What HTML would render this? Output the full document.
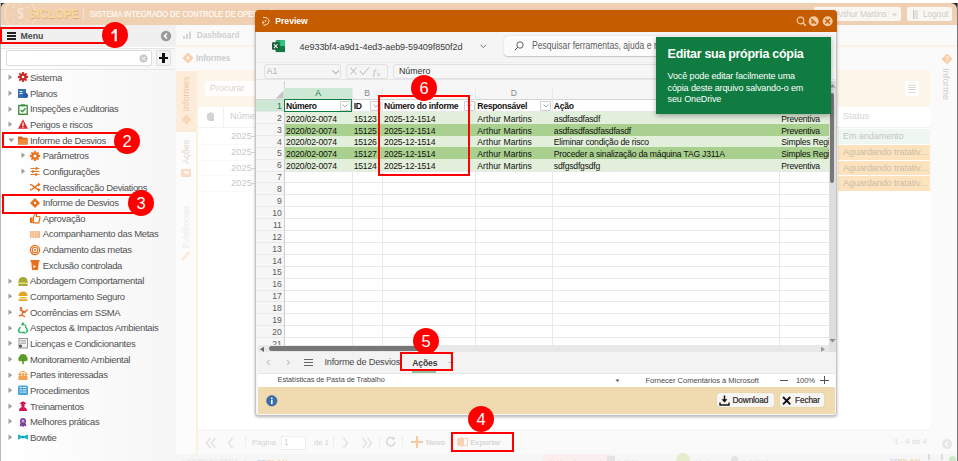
<!DOCTYPE html><html><head><meta charset="utf-8"><style>
html,body{margin:0;padding:0;}
body{width:958px;height:461px;overflow:hidden;position:relative;background:#fff;font-family:'Liberation Sans', sans-serif;}
div{box-sizing:border-box;}
svg{position:absolute;overflow:visible;}
</style></head><body>
<div style="position:absolute;left:0px;top:3px;width:6px;height:6px;background:#333;"></div>
<div style="position:absolute;left:951px;top:3px;width:7px;height:8px;background:#222;"></div>
<div style="position:absolute;left:0px;top:3px;width:1px;height:458px;background:#b8b8b8;"></div>
<div style="position:absolute;left:957px;top:3px;width:1px;height:458px;background:#777;"></div>
<div style="position:absolute;left:1px;top:3px;width:956px;height:22px;background:#efd0b3;border-radius:5px 6px 0 0;"></div>
<div style="position:absolute;left:1px;top:3px;width:60px;height:22px;overflow:hidden;"><svg style="left:0;top:-3px" width="60" height="30"><circle cx="19.5" cy="14" r="15.5" fill="none" stroke="#f5ddc8" stroke-width="1.5"/><path d="M19.5 3 V6 M19.5 22 V25 M8 14 H11 M28 14 H31 M11.5 6 L13.5 8 M27.5 6 L25.5 8 M11.5 22 L13.5 20 M27.5 22 L25.5 20" stroke="#f5ddc8" stroke-width="1.2"/><path d="M22.5 9.5 Q19.5 8.2 17.8 10 Q17 12 19.5 13 Q22 14 21.3 16.5 Q19.8 18.5 16.8 17.3" stroke="#f6e1cf" stroke-width="2.6" fill="none"/></svg></div>
<div style="position:absolute;left:28.5px;top:6.50px;height:15.00px;line-height:15.00px;font-size:12.5px;color:#f9d99c;font-weight:bold;letter-spacing:0px;white-space:nowrap;transform:scaleX(0.91);transform-origin:0 50%;text-shadow:0.5px 0.8px 0.6px #d9ae86;">SICLOPE</div>
<div style="position:absolute;left:83px;top:9px;width:1px;height:11px;background:#f6e2cf;"></div>
<div style="position:absolute;left:89.5px;top:9.20px;height:10.80px;line-height:10.80px;font-size:9px;color:#fdf3ea;font-weight:normal;letter-spacing:0px;white-space:nowrap;transform:scaleX(0.82);transform-origin:0 50%;text-shadow:0 0 0.4px #fff;">SISTEMA INTEGRADO DE CONTROLE DE OPERAÇÕES</div>
<div style="position:absolute;left:814px;top:7px;width:87px;height:14px;background:#faf7f3;border-radius:2px;"></div>
<div style="position:absolute;left:835.5px;top:9.26px;height:10.08px;line-height:10.08px;font-size:8.4px;color:#cfcbc7;font-weight:normal;letter-spacing:-0.1px;white-space:nowrap;">Arthur Martins</div>
<div style="position:absolute;left:887.5px;top:9px;width:1px;height:10px;background:#f3f1ef;"></div>
<svg style="left:891px;top:12.5px" width="8" height="6"><path d="M0.5 0.5 L3.5 3.5 L6.5 0.5Z" fill="#dcd8d4"/></svg>
<div style="position:absolute;left:907px;top:7px;width:45px;height:14px;background:#faf7f3;border-radius:2px;"></div>
<div style="position:absolute;left:913px;top:9.5px;width:4.5px;height:9px;background:#e3e3e3;border-left:1.5px solid #ccc;"></div>
<div style="position:absolute;left:923px;top:9.26px;height:10.08px;line-height:10.08px;font-size:8.4px;color:#cfcbc7;font-weight:normal;letter-spacing:-0.05px;white-space:nowrap;">Logout</div>
<div style="position:absolute;left:1px;top:25px;width:175px;height:436px;background:linear-gradient(to right,#ffffff,#f6f6f6);"></div>
<div style="position:absolute;left:1px;top:25px;width:175px;height:22px;background:#f0f0f0;"></div>
<div style="position:absolute;left:7px;top:32.3px;width:9px;height:1.6px;background:#222;"></div>
<div style="position:absolute;left:7px;top:35.3px;width:9px;height:1.6px;background:#222;"></div>
<div style="position:absolute;left:7px;top:38.3px;width:9px;height:1.6px;background:#222;"></div>
<div style="position:absolute;left:20.5px;top:30.72px;height:10.56px;line-height:10.56px;font-size:8.8px;color:#4a4a4a;font-weight:bold;letter-spacing:0px;white-space:nowrap;">Menu</div>
<svg style="left:160px;top:30px" width="12" height="12"><circle cx="6" cy="6" r="5.2" fill="#9a9a9a"/><path d="M7 3.5 L4.5 6 L7 8.5" stroke="#fff" stroke-width="1.6" fill="none"/></svg>
<div style="position:absolute;left:1px;top:47px;width:174px;height:1px;background:#fff;"></div>
<div style="position:absolute;left:1px;top:48px;width:174px;height:1px;background:#e4e4e4;"></div>
<div style="position:absolute;left:6px;top:50px;width:145.5px;height:15.5px;background:#fff;border:1px solid #dcdcdc;border-radius:2px;"></div>
<svg style="left:139px;top:53.5px" width="9" height="9"><circle cx="4.5" cy="4.5" r="4" fill="#c8c8c8"/><path d="M2.8 2.8 L6.2 6.2 M6.2 2.8 L2.8 6.2" stroke="#fff" stroke-width="1"/></svg>
<div style="position:absolute;left:156px;top:50px;width:15px;height:16px;background:#f2f2f2;border:1px solid #dedede;border-radius:2px;"></div>
<div style="position:absolute;left:159px;top:56.8px;width:9.2px;height:2.4px;background:#111;"></div>
<div style="position:absolute;left:162.4px;top:53.4px;width:2.4px;height:9.2px;background:#111;"></div>
<div style="position:absolute;left:1px;top:69px;width:174px;height:1px;background:#e6e6e6;"></div>
<svg style="left:8.3px;top:74.2px" width="5" height="7"><path d="M0.5 0.5 L4.2 3.2 L0.5 6Z" fill="#9c9c9c"/></svg>
<svg style="left:17.5px;top:72.4px" width="10" height="10"><path d="M10.07 3.87 L10.07 6.13 L8.84 5.67 L8.19 7.24 L9.39 7.79 L7.79 9.39 L7.24 8.19 L5.67 8.84 L6.13 10.07 L3.87 10.07 L4.33 8.84 L2.76 8.19 L2.21 9.39 L0.61 7.79 L1.81 7.24 L1.16 5.67 L-0.07 6.13 L-0.07 3.87 L1.16 4.33 L1.81 2.76 L0.61 2.21 L2.21 0.61 L2.76 1.81 L4.33 1.16 L3.87 -0.07 L6.13 -0.07 L5.67 1.16 L7.24 1.81 L7.79 0.61 L9.39 2.21 L8.19 2.76 L8.84 4.33Z" fill="#c62828"/><circle cx="5" cy="5" r="1.3" fill="#fff"/></svg>
<div style="position:absolute;left:30.0px;top:72.00px;height:11.40px;line-height:11.40px;font-size:9.5px;color:#525252;font-weight:normal;letter-spacing:-0.33px;white-space:nowrap;">Sistema</div>
<svg style="left:8.3px;top:89.8px" width="5" height="7"><path d="M0.5 0.5 L4.2 3.2 L0.5 6Z" fill="#9c9c9c"/></svg>
<svg style="left:17.5px;top:88.0px" width="10" height="10"><rect x="0" y="1" width="8" height="9" fill="#3b6db3"/><rect x="1.5" y="3" width="3" height="1" fill="#cfe"/><rect x="1.5" y="5" width="3" height="1" fill="#cfe"/><circle cx="7.5" cy="7.5" r="2.6" fill="#2a5ca8"/></svg>
<div style="position:absolute;left:30.0px;top:87.64px;height:11.40px;line-height:11.40px;font-size:9.5px;color:#525252;font-weight:normal;letter-spacing:-0.33px;white-space:nowrap;">Planos</div>
<svg style="left:8.3px;top:105.5px" width="5" height="7"><path d="M0.5 0.5 L4.2 3.2 L0.5 6Z" fill="#9c9c9c"/></svg>
<svg style="left:17.5px;top:103.7px" width="10" height="10"><rect x="0.8" y="1.5" width="8.4" height="8.8" fill="none" stroke="#3a8f3a" stroke-width="1.4"/><rect x="3" y="0.3" width="4" height="2" fill="#3a8f3a"/><path d="M2.7 6 L4.4 7.7 L7.5 4.3" stroke="#3a8f3a" stroke-width="1.4" fill="none"/></svg>
<div style="position:absolute;left:30.0px;top:103.29px;height:11.40px;line-height:11.40px;font-size:9.5px;color:#525252;font-weight:normal;letter-spacing:-0.33px;white-space:nowrap;">Inspeções e Auditorias</div>
<svg style="left:8.3px;top:121.1px" width="5" height="7"><path d="M0.5 0.5 L4.2 3.2 L0.5 6Z" fill="#9c9c9c"/></svg>
<svg style="left:17.5px;top:119.3px" width="10" height="10"><path d="M5 0.3 L10 9.8 L0 9.8 Z" fill="#d32f2f"/><rect x="4.4" y="3.5" width="1.2" height="3.5" fill="#fff"/><rect x="4.4" y="7.7" width="1.2" height="1.1" fill="#fff"/></svg>
<div style="position:absolute;left:30.0px;top:118.94px;height:11.40px;line-height:11.40px;font-size:9.5px;color:#525252;font-weight:normal;letter-spacing:-0.33px;white-space:nowrap;">Perigos e riscos</div>
<svg style="left:7.5px;top:138.0px" width="7" height="5"><path d="M0.3 0.5 L6.3 0.5 L3.3 4.3Z" fill="#9c9c9c"/></svg>
<svg style="left:17.5px;top:135.0px" width="10" height="10"><path d="M0 1.5 L4 1.5 L5 2.8 L9.5 2.8 L9.5 9.5 L0 9.5 Z" fill="#d9661a"/><path d="M0.8 4.2 L10.3 4.2 L9.5 9.5 L0 9.5Z" fill="#ef8b3a"/></svg>
<div style="position:absolute;left:30.0px;top:134.58px;height:11.40px;line-height:11.40px;font-size:9.5px;color:#525252;font-weight:normal;letter-spacing:-0.33px;white-space:nowrap;">Informe de Desvios</div>
<svg style="left:21.1px;top:152.4px" width="5" height="7"><path d="M0.5 0.5 L4.2 3.2 L0.5 6Z" fill="#9c9c9c"/></svg>
<svg style="left:30.3px;top:150.6px" width="10" height="10"><path d="M10.07 3.87 L10.07 6.13 L8.84 5.67 L8.19 7.24 L9.39 7.79 L7.79 9.39 L7.24 8.19 L5.67 8.84 L6.13 10.07 L3.87 10.07 L4.33 8.84 L2.76 8.19 L2.21 9.39 L0.61 7.79 L1.81 7.24 L1.16 5.67 L-0.07 6.13 L-0.07 3.87 L1.16 4.33 L1.81 2.76 L0.61 2.21 L2.21 0.61 L2.76 1.81 L4.33 1.16 L3.87 -0.07 L6.13 -0.07 L5.67 1.16 L7.24 1.81 L7.79 0.61 L9.39 2.21 L8.19 2.76 L8.84 4.33Z" fill="#e8701a"/><circle cx="5" cy="5" r="1.5" fill="#fff"/></svg>
<div style="position:absolute;left:42.8px;top:150.23px;height:11.40px;line-height:11.40px;font-size:9.5px;color:#525252;font-weight:normal;letter-spacing:-0.33px;white-space:nowrap;">Parâmetros</div>
<svg style="left:21.1px;top:168.1px" width="5" height="7"><path d="M0.5 0.5 L4.2 3.2 L0.5 6Z" fill="#9c9c9c"/></svg>
<svg style="left:30.3px;top:166.3px" width="10" height="10"><path d="M0.5 2.5 H9.5 M0.5 5.5 H9.5 M0.5 8.5 H9.5" stroke="#e87a2a" stroke-width="1.1"/><rect x="5.5" y="1.2" width="2" height="2.6" fill="#e87a2a"/><rect x="2" y="4.2" width="2" height="2.6" fill="#e87a2a"/><rect x="5" y="7.2" width="2" height="2.6" fill="#e87a2a"/></svg>
<div style="position:absolute;left:42.8px;top:165.87px;height:11.40px;line-height:11.40px;font-size:9.5px;color:#525252;font-weight:normal;letter-spacing:-0.33px;white-space:nowrap;">Configurações</div>
<svg style="left:30.3px;top:181.9px" width="10" height="10"><path d="M0 2.5 C4 2.5 5 8 10 8 M0 8 C4 8 5 2.5 10 2.5" stroke="#e8701a" stroke-width="1.5" fill="none"/><path d="M8 0.5 L10.5 2.5 L8 4.5Z M8 6 L10.5 8 L8 10Z" fill="#e8701a"/></svg>
<div style="position:absolute;left:42.8px;top:181.52px;height:11.40px;line-height:11.40px;font-size:9.5px;color:#525252;font-weight:normal;letter-spacing:-0.33px;white-space:nowrap;">Reclassificação Deviations</div>
<svg style="left:30.3px;top:197.6px" width="10" height="10"><path d="M5 0 L10 5 L5 10 L0 5Z" fill="#e8701a"/><circle cx="5" cy="5" r="1.2" fill="#fff"/></svg>
<div style="position:absolute;left:42.8px;top:197.16px;height:11.40px;line-height:11.40px;font-size:9.5px;color:#525252;font-weight:normal;letter-spacing:-0.33px;white-space:nowrap;">Informe de Desvios</div>
<svg style="left:30.3px;top:213.2px" width="10" height="10"><rect x="0" y="4.5" width="2.6" height="5.5" fill="#e8701a"/><path d="M3.3 4.5 L5.5 0.5 Q7 0.5 6.5 3.5 L9.5 3.5 Q10.5 4 9.8 5.5 L8.8 9.8 L3.3 9.8Z" fill="none" stroke="#e8701a" stroke-width="1.2"/></svg>
<div style="position:absolute;left:42.8px;top:212.81px;height:11.40px;line-height:11.40px;font-size:9.5px;color:#525252;font-weight:normal;letter-spacing:-0.33px;white-space:nowrap;">Aprovação</div>
<svg style="left:30.3px;top:228.8px" width="10" height="10"><rect x="0" y="2" width="10" height="7" fill="#f6b98a"/><path d="M2 2 V9 M4.5 2 V9 M7 2 V9" stroke="#fbe0cc" stroke-width="0.8"/></svg>
<div style="position:absolute;left:42.8px;top:228.45px;height:11.40px;line-height:11.40px;font-size:9.5px;color:#525252;font-weight:normal;letter-spacing:-0.33px;white-space:nowrap;">Acompanhamento das Metas</div>
<svg style="left:30.3px;top:244.5px" width="10" height="10"><circle cx="5" cy="5" r="4.6" fill="none" stroke="#e8701a" stroke-width="1.2"/><circle cx="5" cy="5" r="2.8" fill="none" stroke="#e8701a" stroke-width="1.1"/><circle cx="5" cy="5" r="1.1" fill="#e8701a"/></svg>
<div style="position:absolute;left:42.8px;top:244.10px;height:11.40px;line-height:11.40px;font-size:9.5px;color:#525252;font-weight:normal;letter-spacing:-0.33px;white-space:nowrap;">Andamento das metas</div>
<svg style="left:30.3px;top:260.1px" width="10" height="10"><rect x="0.5" y="0" width="9" height="2" fill="#e8701a"/><path d="M1.3 2 L8.7 2 L8 10 L2 10Z" fill="#e8701a"/><path d="M3.5 5 L6 6.5 L3.5 8" fill="#fff"/></svg>
<div style="position:absolute;left:42.8px;top:259.74px;height:11.40px;line-height:11.40px;font-size:9.5px;color:#525252;font-weight:normal;letter-spacing:-0.33px;white-space:nowrap;">Exclusão controlada</div>
<svg style="left:8.3px;top:277.6px" width="5" height="7"><path d="M0.5 0.5 L4.2 3.2 L0.5 6Z" fill="#9c9c9c"/></svg>
<svg style="left:17.5px;top:275.8px" width="10" height="10"><path d="M0.5 6 Q0.5 1 5 1 Q9.5 1 9.5 6Z" fill="#a6a83a"/><rect x="0" y="6" width="10" height="1.6" fill="#c9c84a"/><rect x="0.5" y="8" width="9" height="2" fill="#a6a83a"/></svg>
<div style="position:absolute;left:30.0px;top:275.38px;height:11.40px;line-height:11.40px;font-size:9.5px;color:#525252;font-weight:normal;letter-spacing:-0.33px;white-space:nowrap;">Abordagem Comportamental</div>
<svg style="left:8.3px;top:293.2px" width="5" height="7"><path d="M0.5 0.5 L4.2 3.2 L0.5 6Z" fill="#9c9c9c"/></svg>
<svg style="left:17.5px;top:291.4px" width="10" height="10"><path d="M0.5 5 Q0.5 0.5 5 0.5 Q9.5 0.5 9.5 5Z" fill="#e0a820"/><rect x="1.5" y="6" width="7" height="1.5" fill="#e8b830"/><rect x="0.5" y="8.3" width="9" height="1.7" fill="#e0a820"/></svg>
<div style="position:absolute;left:30.0px;top:291.03px;height:11.40px;line-height:11.40px;font-size:9.5px;color:#525252;font-weight:normal;letter-spacing:-0.33px;white-space:nowrap;">Comportamento Seguro</div>
<svg style="left:8.3px;top:308.9px" width="5" height="7"><path d="M0.5 0.5 L4.2 3.2 L0.5 6Z" fill="#9c9c9c"/></svg>
<svg style="left:17.5px;top:307.1px" width="10" height="10"><circle cx="3" cy="1.5" r="1.4" fill="#e46b2a"/><path d="M2 3 L7 5 L9.5 2.5 M5 4.5 L4 8 L7 10 M4 8 L1 9" stroke="#e46b2a" stroke-width="1.5" fill="none"/></svg>
<div style="position:absolute;left:30.0px;top:306.68px;height:11.40px;line-height:11.40px;font-size:9.5px;color:#525252;font-weight:normal;letter-spacing:-0.33px;white-space:nowrap;">Ocorrências em SSMA</div>
<svg style="left:8.3px;top:324.5px" width="5" height="7"><path d="M0.5 0.5 L4.2 3.2 L0.5 6Z" fill="#9c9c9c"/></svg>
<svg style="left:17.5px;top:322.7px" width="10" height="10"><path d="M3.6 2.2 L5 0.3 L6.4 2.2 M7.6 4 L9.6 7.5 L8.3 9.6 M6.5 9.6 H3.5 M1.7 9.6 L0.4 7.5 L2.4 4" stroke="#2bb360" stroke-width="1.5" fill="none"/><path d="M6.3 1.6 L8.6 2.6 L7.4 4.6Z M3.3 8.3 L3.3 10.6 L1.3 9.6Z M5.7 10.6 L6.9 8.5 L8.1 10.5Z" fill="#2bb360"/></svg>
<div style="position:absolute;left:30.0px;top:322.32px;height:11.40px;line-height:11.40px;font-size:9.5px;color:#525252;font-weight:normal;letter-spacing:-0.33px;white-space:nowrap;">Aspectos &amp; Impactos Ambientais</div>
<svg style="left:8.3px;top:340.2px" width="5" height="7"><path d="M0.5 0.5 L4.2 3.2 L0.5 6Z" fill="#9c9c9c"/></svg>
<svg style="left:17.5px;top:338.4px" width="10" height="10"><rect x="1" y="0.5" width="8.5" height="9.5" fill="#f2f2f2" stroke="#888" stroke-width="0.9"/><path d="M2.5 2.5 H8 M2.5 4 H8 M2.5 5.5 H8" stroke="#999" stroke-width="0.7"/><circle cx="2.5" cy="8" r="1.6" fill="#555"/></svg>
<div style="position:absolute;left:30.0px;top:337.97px;height:11.40px;line-height:11.40px;font-size:9.5px;color:#525252;font-weight:normal;letter-spacing:-0.33px;white-space:nowrap;">Licenças e Condicionantes</div>
<svg style="left:8.3px;top:355.8px" width="5" height="7"><path d="M0.5 0.5 L4.2 3.2 L0.5 6Z" fill="#9c9c9c"/></svg>
<svg style="left:17.5px;top:354.0px" width="10" height="10"><circle cx="5" cy="3.8" r="3.8" fill="#5d9b2a"/><circle cx="2.5" cy="5" r="2.3" fill="#5d9b2a"/><circle cx="7.5" cy="5" r="2.3" fill="#5d9b2a"/><rect x="4.2" y="6" width="1.6" height="4.2" fill="#5d9b2a"/></svg>
<div style="position:absolute;left:30.0px;top:353.61px;height:11.40px;line-height:11.40px;font-size:9.5px;color:#525252;font-weight:normal;letter-spacing:-0.33px;white-space:nowrap;">Monitoramento Ambiental</div>
<svg style="left:8.3px;top:371.5px" width="5" height="7"><path d="M0.5 0.5 L4.2 3.2 L0.5 6Z" fill="#9c9c9c"/></svg>
<svg style="left:17.5px;top:369.7px" width="10" height="10"><circle cx="5" cy="4.6" r="1.5" fill="#f4a050"/><circle cx="2" cy="4.6" r="1.3" fill="#f4a050"/><circle cx="8" cy="4.6" r="1.3" fill="#f4a050"/><rect x="0.5" y="6" width="9" height="4" fill="#f4a050"/><path d="M0.5 4.5 Q5 -2 9.5 4.5" stroke="#f4a050" fill="none" stroke-width="1"/></svg>
<div style="position:absolute;left:30.0px;top:369.25px;height:11.40px;line-height:11.40px;font-size:9.5px;color:#525252;font-weight:normal;letter-spacing:-0.33px;white-space:nowrap;">Partes interessadas</div>
<svg style="left:8.3px;top:387.1px" width="5" height="7"><path d="M0.5 0.5 L4.2 3.2 L0.5 6Z" fill="#9c9c9c"/></svg>
<svg style="left:17.5px;top:385.3px" width="10" height="10"><rect x="0" y="0.5" width="10" height="9.5" rx="1.5" fill="#4aa3d8"/><rect x="1.6" y="2" width="2.2" height="1" fill="#dff0fa"/><rect x="4.6" y="2" width="3.8" height="1" fill="#dff0fa"/><rect x="1.6" y="4.3" width="2.2" height="1" fill="#dff0fa"/><rect x="4.6" y="4.3" width="3.8" height="1" fill="#dff0fa"/><rect x="1.6" y="6.6" width="2.2" height="1" fill="#dff0fa"/><rect x="4.6" y="6.6" width="3.8" height="1" fill="#dff0fa"/></svg>
<div style="position:absolute;left:30.0px;top:384.90px;height:11.40px;line-height:11.40px;font-size:9.5px;color:#525252;font-weight:normal;letter-spacing:-0.33px;white-space:nowrap;">Procedimentos</div>
<svg style="left:8.3px;top:402.7px" width="5" height="7"><path d="M0.5 0.5 L4.2 3.2 L0.5 6Z" fill="#9c9c9c"/></svg>
<svg style="left:17.5px;top:400.9px" width="10" height="10"><path d="M5 0.3 L8.5 2.3 L5 4.3 L1.5 2.3Z" fill="#d4145a"/><circle cx="5" cy="4.5" r="1.8" fill="#d4145a"/><path d="M1 10 Q1 6 5 6 Q9 6 9 10Z" fill="#d4145a"/></svg>
<div style="position:absolute;left:30.0px;top:400.55px;height:11.40px;line-height:11.40px;font-size:9.5px;color:#525252;font-weight:normal;letter-spacing:-0.33px;white-space:nowrap;">Treinamentos</div>
<svg style="left:8.3px;top:418.4px" width="5" height="7"><path d="M0.5 0.5 L4.2 3.2 L0.5 6Z" fill="#9c9c9c"/></svg>
<svg style="left:17.5px;top:416.6px" width="10" height="10"><circle cx="5" cy="4" r="3" fill="#7b3f9a"/><circle cx="5" cy="4" r="1.5" fill="#c9a6dd"/><path d="M2.5 6 L1.5 9.5 L3.5 8.8 L5 10 L6.5 8.8 L8.5 9.5 L7.5 6Z" fill="#7b3f9a"/></svg>
<div style="position:absolute;left:30.0px;top:416.19px;height:11.40px;line-height:11.40px;font-size:9.5px;color:#525252;font-weight:normal;letter-spacing:-0.33px;white-space:nowrap;">Melhores práticas</div>
<svg style="left:8.3px;top:434.0px" width="5" height="7"><path d="M0.5 0.5 L4.2 3.2 L0.5 6Z" fill="#9c9c9c"/></svg>
<svg style="left:17.5px;top:432.2px" width="10" height="10"><path d="M0 2.8 Q0 2.3 0.6 2.5 L4.2 4.2 L4.2 5.8 L0.6 7.5 Q0 7.7 0 7.2Z M10 2.8 Q10 2.3 9.4 2.5 L5.8 4.2 L5.8 5.8 L9.4 7.5 Q10 7.7 10 7.2Z" fill="#22b5c8"/><rect x="3.9" y="3.8" width="2.2" height="2.4" rx="0.5" fill="#1a9fb2"/></svg>
<div style="position:absolute;left:30.0px;top:431.84px;height:11.40px;line-height:11.40px;font-size:9.5px;color:#525252;font-weight:normal;letter-spacing:-0.33px;white-space:nowrap;">Bowtie</div>
<div style="position:absolute;left:176px;top:25px;width:781px;height:436px;background:#fafafa;"></div>
<svg style="left:183px;top:30px" width="10" height="10"><rect x="0" y="6" width="2" height="3" fill="#d5d5d5"/><rect x="3" y="4" width="2" height="5" fill="#d5d5d5"/><rect x="6" y="1.5" width="2" height="7.5" fill="#d5d5d5"/></svg>
<div style="position:absolute;left:196.8px;top:30.88px;height:9.84px;line-height:9.84px;font-size:8.2px;color:#d0d0d0;font-weight:bold;letter-spacing:0px;white-space:nowrap;">Dashboard</div>
<div style="position:absolute;left:175px;top:44.5px;width:782px;height:2px;background:#fcf1e2;"></div>
<svg style="left:182px;top:52px" width="12" height="12"><path d="M6 0.5 L11.5 6 L6 11.5 L0.5 6Z" fill="#f8cfaa"/><circle cx="6" cy="6" r="1.4" fill="#fff"/></svg>
<div style="position:absolute;left:196px;top:54.32px;height:9.96px;line-height:9.96px;font-size:8.3px;color:#cdcdcd;font-weight:bold;letter-spacing:-0.1px;white-space:nowrap;">Informes</div>
<div style="position:absolute;left:176px;top:70px;width:20px;height:384px;background:#fcfcfc;"></div>
<div style="position:absolute;left:176px;top:70.5px;width:20px;height:61px;background:#fcecd9;"></div>
<div style="position:absolute;left:186px;top:94px;transform:translate(-50%,-50%) rotate(-90deg);font-size:9px;color:#f0c9a5;white-space:nowrap;">Informes</div>
<svg style="left:181px;top:114px" width="11" height="11"><path d="M5.5 0.5 L10.5 5.5 L5.5 10.5 L0.5 5.5Z" fill="#f9d6b8"/></svg>
<div style="position:absolute;left:186px;top:152px;transform:translate(-50%,-50%) rotate(-90deg);font-size:8.6px;color:#e2d8ce;white-space:nowrap;">Ações</div>
<div style="position:absolute;left:181px;top:168.5px;width:10px;height:8px;background:#f9dcc6;border-radius:1.5px;"></div>
<div style="position:absolute;left:183.5px;top:171px;width:5px;height:3px;background:#fdf3ea;"></div>
<div style="position:absolute;left:186px;top:227px;transform:translate(-50%,-50%) rotate(-90deg);font-size:8.8px;color:#efebe7;white-space:nowrap;">Evidências</div>
<svg style="left:181px;top:250px" width="10" height="11"><path d="M2.5 9 L7.5 2.5" stroke="#fbe6d6" stroke-width="2.8" stroke-linecap="round"/><path d="M2.5 9 L7.5 2.5" stroke="#fdf6f0" stroke-width="0.8" stroke-linecap="round"/></svg>
<div style="position:absolute;left:196px;top:70px;width:1.5px;height:384px;background:#fcf2dc;"></div>
<div style="position:absolute;left:197.5px;top:70px;width:732.5px;height:37px;background:#fdf5ea;"></div>
<div style="position:absolute;left:205px;top:81px;width:60px;height:14.5px;background:#fffefc;"></div>
<div style="position:absolute;left:210px;top:82.90px;height:10.80px;line-height:10.80px;font-size:9px;color:#d9d4ce;font-weight:normal;letter-spacing:0px;white-space:nowrap;">Procurar</div>
<div style="position:absolute;left:904.5px;top:81px;width:14px;height:14.5px;background:#fffefc;"></div>
<div style="position:absolute;left:907.5px;top:84.5px;width:8px;height:0.9px;background:#dcdcdc;"></div>
<div style="position:absolute;left:907.5px;top:86.9px;width:8px;height:0.9px;background:#dcdcdc;"></div>
<div style="position:absolute;left:907.5px;top:89.3px;width:8px;height:0.9px;background:#dcdcdc;"></div>
<div style="position:absolute;left:907.5px;top:91.7px;width:8px;height:0.9px;background:#dcdcdc;"></div>
<div style="position:absolute;left:197.5px;top:107px;width:732.5px;height:323px;background:#fff;"></div>
<div style="position:absolute;left:197.5px;top:127px;width:732.5px;height:1px;background:#f3f3f3;"></div>
<div style="position:absolute;left:223px;top:107px;width:1px;height:20.5px;background:#f1f1f1;"></div>
<svg style="left:205px;top:111px" width="10" height="12"><path d="M2 3 L6 1 L9 3 L9 10 L4 10 L2 8Z" fill="#d3d3d3"/></svg>
<div style="position:absolute;left:230px;top:111.42px;height:11.16px;line-height:11.16px;font-size:9.3px;color:#cdcdcd;font-weight:normal;letter-spacing:0px;white-space:nowrap;">Número</div>
<div style="position:absolute;left:843px;top:110.92px;height:11.16px;line-height:11.16px;font-size:9.3px;color:#d4d4d4;font-weight:normal;letter-spacing:0px;white-space:nowrap;">Status</div>
<div style="position:absolute;left:231px;top:130.26px;height:11.28px;line-height:11.28px;font-size:9.4px;color:#c8c8c8;font-weight:normal;letter-spacing:0px;white-space:nowrap;">2025-12-1514</div>
<div style="position:absolute;left:838px;top:129.2px;width:92px;height:15.6px;background:#eef8f1;"></div>
<div style="position:absolute;left:843px;top:131.14px;height:10.92px;line-height:10.92px;font-size:9.1px;color:#c6c6c6;font-weight:normal;letter-spacing:-0.1px;white-space:nowrap;">Em andamento</div>
<div style="position:absolute;left:197.5px;top:144px;width:732.5px;height:0.8px;background:#fafafa;"></div>
<div style="position:absolute;left:838px;top:144.2px;width:92px;height:0.8px;background:#fff;"></div>
<div style="position:absolute;left:231px;top:145.96px;height:11.28px;line-height:11.28px;font-size:9.4px;color:#c8c8c8;font-weight:normal;letter-spacing:0px;white-space:nowrap;">2025-12-1514</div>
<div style="position:absolute;left:838px;top:144.89999999999998px;width:92px;height:15.6px;background:#fde3bd;"></div>
<div style="position:absolute;left:843px;top:146.84px;height:10.92px;line-height:10.92px;font-size:9.1px;color:#c9bcab;font-weight:normal;letter-spacing:-0.1px;white-space:nowrap;">Aguardando tratativ...</div>
<div style="position:absolute;left:197.5px;top:159.7px;width:732.5px;height:0.8px;background:#fafafa;"></div>
<div style="position:absolute;left:838px;top:159.89999999999998px;width:92px;height:0.8px;background:#fff;"></div>
<div style="position:absolute;left:231px;top:161.66px;height:11.28px;line-height:11.28px;font-size:9.4px;color:#c8c8c8;font-weight:normal;letter-spacing:0px;white-space:nowrap;">2025-12-1514</div>
<div style="position:absolute;left:838px;top:160.6px;width:92px;height:15.6px;background:#fde3bd;"></div>
<div style="position:absolute;left:843px;top:162.54px;height:10.92px;line-height:10.92px;font-size:9.1px;color:#c9bcab;font-weight:normal;letter-spacing:-0.1px;white-space:nowrap;">Aguardando tratativ...</div>
<div style="position:absolute;left:197.5px;top:175.4px;width:732.5px;height:0.8px;background:#fafafa;"></div>
<div style="position:absolute;left:838px;top:175.6px;width:92px;height:0.8px;background:#fff;"></div>
<div style="position:absolute;left:231px;top:177.36px;height:11.28px;line-height:11.28px;font-size:9.4px;color:#c8c8c8;font-weight:normal;letter-spacing:0px;white-space:nowrap;">2025-12-1514</div>
<div style="position:absolute;left:838px;top:176.29999999999998px;width:92px;height:15.6px;background:#fde3bd;"></div>
<div style="position:absolute;left:843px;top:178.24px;height:10.92px;line-height:10.92px;font-size:9.1px;color:#c9bcab;font-weight:normal;letter-spacing:-0.1px;white-space:nowrap;">Aguardando tratativ...</div>
<div style="position:absolute;left:197.5px;top:191.1px;width:732.5px;height:0.8px;background:#fafafa;"></div>
<div style="position:absolute;left:838px;top:191.29999999999998px;width:92px;height:0.8px;background:#fff;"></div>
<div style="position:absolute;left:930px;top:46.5px;width:27px;height:407px;background:#fafafa;"></div>
<svg style="left:941px;top:53px" width="12" height="12"><path d="M6 0.5 L11.5 6 L6 11.5 L0.5 6Z" fill="#f8cfaa"/><path d="M5.2 3.5 H7 L6.5 7.5 L5 8.5" stroke="#fdf0e4" stroke-width="0.9" fill="none"/></svg>
<div style="position:absolute;left:946px;top:84px;transform:translate(-50%,-50%) rotate(90deg);font-size:9.5px;color:#cdcdcd;white-space:nowrap;">Informe</div>
<div style="position:absolute;left:197.5px;top:430px;width:732.5px;height:1px;background:#f2f2f2;"></div>
<svg style="left:205px;top:436.5px" width="14" height="12"><path d="M5.5 1 L1.5 6 L5.5 11 M10.5 1 L6.5 6 L10.5 11" stroke="#e3e3e3" stroke-width="1.6" fill="none"/></svg>
<svg style="left:227px;top:436.5px" width="8" height="12"><path d="M5.5 1 L1.5 6 L5.5 11" stroke="#e3e3e3" stroke-width="1.6" fill="none"/></svg>
<div style="position:absolute;left:245px;top:436px;width:1px;height:12px;background:#efefef;"></div>
<div style="position:absolute;left:252px;top:437.82px;height:9.36px;line-height:9.36px;font-size:7.8px;color:#d5d5d5;font-weight:normal;letter-spacing:-0.1px;white-space:nowrap;">Página</div>
<div style="position:absolute;left:280.5px;top:435.5px;width:25px;height:14px;background:#fff;border:1px solid #eee;"></div>
<div style="position:absolute;left:284px;top:437.52px;height:9.96px;line-height:9.96px;font-size:8.3px;color:#d0d0d0;font-weight:normal;letter-spacing:0px;white-space:nowrap;">1</div>
<div style="position:absolute;left:314px;top:437.82px;height:9.36px;line-height:9.36px;font-size:7.8px;color:#d5d5d5;font-weight:normal;letter-spacing:-0.1px;white-space:nowrap;">de 1</div>
<div style="position:absolute;left:333px;top:436px;width:1px;height:12px;background:#efefef;"></div>
<svg style="left:342px;top:436.5px" width="8" height="12"><path d="M1.5 1 L5.5 6 L1.5 11" stroke="#e3e3e3" stroke-width="1.6" fill="none"/></svg>
<svg style="left:361px;top:436.5px" width="14" height="12"><path d="M1.5 1 L5.5 6 L1.5 11 M6.5 1 L10.5 6 L6.5 11" stroke="#e3e3e3" stroke-width="1.6" fill="none"/></svg>
<div style="position:absolute;left:379px;top:436px;width:1px;height:12px;background:#efefef;"></div>
<svg style="left:385px;top:436px" width="12" height="12"><path d="M10 6 A4.2 4.2 0 1 1 8.5 2.5" stroke="#d8d8d8" stroke-width="1.5" fill="none"/><path d="M7 0.5 L10.5 2 L8 4.5Z" fill="#d8d8d8"/></svg>
<div style="position:absolute;left:402px;top:436px;width:1px;height:12px;background:#efefef;"></div>
<div style="position:absolute;left:411px;top:441px;width:12px;height:2.4px;background:#f8c89f;"></div>
<div style="position:absolute;left:415.8px;top:436.2px;width:2.4px;height:12px;background:#f8c89f;"></div>
<div style="position:absolute;left:426px;top:437.70px;height:9.60px;line-height:9.60px;font-size:8px;color:#d6d6d6;font-weight:bold;letter-spacing:-0.2px;white-space:nowrap;">Novo</div>
<svg style="left:456.5px;top:437px" width="11" height="10"><path d="M0 1.5 L6 0 L6 10 L0 8.5Z" fill="#f8d3b7"/><rect x="6.5" y="1.5" width="4" height="7" fill="none" stroke="#f8d3b7" stroke-width="1"/></svg>
<div style="position:absolute;left:470px;top:437.70px;height:9.60px;line-height:9.60px;font-size:8px;color:#d8d8d8;font-weight:bold;letter-spacing:-0.3px;white-space:nowrap;">Exportar</div>
<div style="position:absolute;left:894px;top:437.32px;height:9.36px;line-height:9.36px;font-size:7.8px;color:#dcdcdc;font-weight:normal;letter-spacing:0px;white-space:nowrap;">1 - 4 de 4</div>
<svg style="left:941px;top:437.5px" width="12" height="12"><circle cx="6" cy="6" r="5" fill="#e6e6e6"/><path d="M7 3.5 L4.5 6 L7 8.5" stroke="#fff" stroke-width="1.4" fill="none"/></svg>
<div style="position:absolute;left:175px;top:453.6px;width:782px;height:8px;background:#f6f6f6;"></div>
<div style="position:absolute;left:183px;top:458.30px;height:8.40px;line-height:8.40px;font-size:7px;color:#e6e6e6;font-weight:normal;letter-spacing:0px;white-space:nowrap;">LICENÇAS PARA...</div>
<div style="position:absolute;left:244px;top:455.70px;height:9.60px;line-height:9.60px;font-size:8px;color:#f8d9b8;font-weight:normal;letter-spacing:0px;white-space:nowrap;">/</div>
<div style="position:absolute;left:257px;top:458.00px;height:9.00px;line-height:9.00px;font-size:7.5px;color:#c9d6ea;font-weight:bold;letter-spacing:0px;white-space:nowrap;">FR<span style='color:#f6d9a8'>PLAN</span></div>
<div style="position:absolute;left:543px;top:454px;width:70px;height:7px;background:#fbeeee;"></div>
<div style="position:absolute;left:548px;top:457.50px;height:9.00px;line-height:9.00px;font-size:7.5px;color:#f5d3d3;font-weight:normal;letter-spacing:0px;white-space:nowrap;">&#9825; Um dia a mais</div>
<div style="position:absolute;left:607px;top:456px;width:8px;height:5px;background:#e3e3e3;"></div>
<div style="position:absolute;left:617px;top:457.50px;height:9.00px;line-height:9.00px;font-size:7.5px;color:#e6e6e6;font-weight:normal;letter-spacing:0px;white-space:nowrap;">1.9M ha</div>
<div style="position:absolute;left:676px;top:453px;width:14px;height:14px;border-radius:50%;background:#e6edcf;"></div>
<div style="position:absolute;left:695px;top:457.50px;height:9.00px;line-height:9.00px;font-size:7.5px;color:#e8e8e8;font-weight:normal;letter-spacing:0px;white-space:nowrap;">Motiva</div>
<div style="position:absolute;left:731px;top:456px;width:7px;height:7px;border-radius:50%;background:#e3e3e3;"></div>
<div style="position:absolute;left:742px;top:457.50px;height:9.00px;line-height:9.00px;font-size:7.5px;color:#e8e8e8;font-weight:normal;letter-spacing:0px;white-space:nowrap;">0.08510</div>
<div style="position:absolute;left:890px;top:457.00px;height:9.00px;line-height:9.00px;font-size:7.5px;color:#c9d6ea;font-weight:bold;letter-spacing:0px;white-space:nowrap;">FR<span style='color:#f6d9a8'>PLAN</span></div>
<div style="position:absolute;left:928px;top:454px;width:2px;height:6px;background:#ddd;"></div>
<div style="position:absolute;left:941px;top:454px;width:2px;height:6px;background:#ddd;"></div>
<div style="position:absolute;left:949px;top:456px;width:7px;height:7px;border-radius:50%;background:#cde8c8;"></div>
<div style="position:absolute;left:254.5px;top:10px;width:582.8px;height:406px;background:#f6f6f6;border-radius:4px 4px 3px 3px;box-shadow:0 1px 3px rgba(0,0,0,0.3);border:1px solid #c4c4c4;"></div>
<div style="position:absolute;left:254.5px;top:10px;width:582.8px;height:22px;background:#c65c00;border-radius:4px 4px 0 0;"></div>
<svg style="left:261px;top:15.5px" width="11" height="11"><path d="M2 1.3 Q8.5 1.5 8 5.5 Q7.5 8.5 4.5 8.8" stroke="#f8e0cc" stroke-width="1" fill="none"/><path d="M1.5 4.5 L3.5 6.5 L1.5 8.5Z" fill="#f8e0cc"/><circle cx="4.5" cy="4.8" r="0.9" fill="#f8e0cc"/><rect x="2.5" y="8.5" width="2" height="1.2" fill="#f8e0cc"/></svg>
<div style="position:absolute;left:275.3px;top:15.54px;height:10.32px;line-height:10.32px;font-size:8.6px;color:#fff;font-weight:bold;letter-spacing:0px;white-space:nowrap;">Preview</div>
<svg style="left:795.5px;top:15.5px" width="12" height="12"><circle cx="4.5" cy="4.5" r="3.3" stroke="#f2c9a3" stroke-width="1.2" fill="none"/><path d="M6.9 6.9 L9.8 9.8" stroke="#f2c9a3" stroke-width="1.5"/></svg>
<svg style="left:808px;top:15.5px" width="12" height="12"><circle cx="5.7" cy="5.3" r="5" fill="#f2c9a3"/><path d="M3.3 3 L8.2 7.8" stroke="#c65c00" stroke-width="1.3"/><path d="M3.5 4.5 L3.5 7.5 L6.5 7.5Z" fill="#c65c00"/></svg>
<svg style="left:822px;top:15.5px" width="12" height="12"><circle cx="5.7" cy="5.3" r="5" fill="#f2c9a3"/><path d="M3.4 3 L8 7.6 M8 3 L3.4 7.6" stroke="#c65c00" stroke-width="1.4"/></svg>
<div style="position:absolute;left:255.5px;top:32px;width:580.8px;height:31px;background:#f5f5f5;"></div>
<svg style="left:272px;top:40px;transform:scale(0.93);transform-origin:0 0" width="14" height="13"><rect x="4" y="0" width="10" height="13" rx="1" fill="#21a366"/><rect x="4" y="6.5" width="10" height="6.5" fill="#107c41"/><rect x="9" y="0" width="5" height="6.5" fill="#33c481"/><rect x="0" y="2.5" width="8" height="8" rx="1" fill="#185c37"/><path d="M2 4.3 L6 8.7 M6 4.3 L2 8.7" stroke="#fff" stroke-width="1.1"/></svg>
<div style="position:absolute;left:299.6px;top:41.60px;height:10.80px;line-height:10.80px;font-size:9px;color:#3a3a3a;font-weight:normal;letter-spacing:-0.05px;white-space:nowrap;">4e933bf4-a9d1-4ed3-aeb9-59409f850f2d</div>
<svg style="left:480px;top:44px" width="7" height="5"><path d="M0.5 0.8 L3.3 3.6 L6 0.8" stroke="#666" stroke-width="0.9" fill="none"/></svg>
<div style="position:absolute;left:504px;top:36.3px;width:325px;height:20px;background:#fbfbfb;border-radius:4px;box-shadow:0 0.5px 1.5px rgba(0,0,0,0.2);"></div>
<svg style="left:514px;top:41px" width="10" height="10"><circle cx="6" cy="4" r="3.2" stroke="#555" stroke-width="0.9" fill="none"/><path d="M3.7 6.3 L0.7 9.3" stroke="#555" stroke-width="1"/></svg>
<div style="position:absolute;left:532px;top:40.30px;height:12.00px;line-height:12.00px;font-size:10px;color:#5f5f5f;font-weight:normal;letter-spacing:0px;white-space:nowrap;transform:scaleX(0.86);transform-origin:0 50%;">Pesquisar ferramentas, ajuda e mais</div>
<div style="position:absolute;left:255.5px;top:62px;width:580.8px;height:0.6px;background:#eeeeee;"></div>
<div style="position:absolute;left:263.5px;top:63.5px;width:77px;height:15px;background:#f5f5f5;border:1px solid #e1e1e1;border-radius:3px;"></div>
<div style="position:absolute;left:266.5px;top:65.90px;height:10.80px;line-height:10.80px;font-size:9px;color:#b5b5b5;font-weight:normal;letter-spacing:0px;white-space:nowrap;">A1</div>
<svg style="left:332px;top:69.5px" width="8" height="5"><path d="M0.5 0.5 L3.8 3.8 L7 0.5" stroke="#888" stroke-width="0.9" fill="none"/></svg>
<div style="position:absolute;left:346px;top:63.5px;width:42px;height:15px;background:#f5f5f5;border:1px solid #e1e1e1;border-radius:3px;"></div>
<svg style="left:349px;top:66px" width="40" height="11"><path d="M1.5 1.5 L7.5 8.5 M7.5 1.5 L1.5 8.5" stroke="#b0b0b0" stroke-width="0.9"/><path d="M11 5 L14 8.5 L20 1.5" stroke="#b0b0b0" stroke-width="0.9" fill="none"/><text x="24" y="8.5" font-size="9" font-style="italic" fill="#b0b0b0" font-family="Liberation Serif">f</text><text x="28" y="10" font-size="6" fill="#b0b0b0" font-family="Liberation Sans">x</text></svg>
<div style="position:absolute;left:393px;top:63.5px;width:436px;height:15px;background:#f6f6f6;border:1px solid #e1e1e1;border-radius:3px;"></div>
<div style="position:absolute;left:399px;top:66.02px;height:10.56px;line-height:10.56px;font-size:8.8px;color:#333;font-weight:normal;letter-spacing:0px;white-space:nowrap;">Número</div>
<div style="position:absolute;left:255.5px;top:78.6px;width:580.8px;height:0.6px;background:#e6e6e6;"></div>
<div style="position:absolute;left:284.3px;top:99.6px;width:544.7px;height:245.4px;background:#fff;"></div>
<div style="position:absolute;left:255.5px;top:111.0px;width:573.5px;height:0.7px;background:#e9e9e9;"></div>
<div style="position:absolute;left:255.5px;top:122.89999999999999px;width:573.5px;height:0.7px;background:#e9e9e9;"></div>
<div style="position:absolute;left:255.5px;top:134.8px;width:573.5px;height:0.7px;background:#e9e9e9;"></div>
<div style="position:absolute;left:255.5px;top:146.7px;width:573.5px;height:0.7px;background:#e9e9e9;"></div>
<div style="position:absolute;left:255.5px;top:158.6px;width:573.5px;height:0.7px;background:#e9e9e9;"></div>
<div style="position:absolute;left:255.5px;top:170.5px;width:573.5px;height:0.7px;background:#e9e9e9;"></div>
<div style="position:absolute;left:255.5px;top:182.39999999999998px;width:573.5px;height:0.7px;background:#e9e9e9;"></div>
<div style="position:absolute;left:255.5px;top:194.3px;width:573.5px;height:0.7px;background:#e9e9e9;"></div>
<div style="position:absolute;left:255.5px;top:206.2px;width:573.5px;height:0.7px;background:#e9e9e9;"></div>
<div style="position:absolute;left:255.5px;top:218.1px;width:573.5px;height:0.7px;background:#e9e9e9;"></div>
<div style="position:absolute;left:255.5px;top:230.0px;width:573.5px;height:0.7px;background:#e9e9e9;"></div>
<div style="position:absolute;left:255.5px;top:241.9px;width:573.5px;height:0.7px;background:#e9e9e9;"></div>
<div style="position:absolute;left:255.5px;top:253.8px;width:573.5px;height:0.7px;background:#e9e9e9;"></div>
<div style="position:absolute;left:255.5px;top:265.7px;width:573.5px;height:0.7px;background:#e9e9e9;"></div>
<div style="position:absolute;left:255.5px;top:277.6px;width:573.5px;height:0.7px;background:#e9e9e9;"></div>
<div style="position:absolute;left:255.5px;top:289.5px;width:573.5px;height:0.7px;background:#e9e9e9;"></div>
<div style="position:absolute;left:255.5px;top:301.4px;width:573.5px;height:0.7px;background:#e9e9e9;"></div>
<div style="position:absolute;left:255.5px;top:313.3px;width:573.5px;height:0.7px;background:#e9e9e9;"></div>
<div style="position:absolute;left:255.5px;top:325.2px;width:573.5px;height:0.7px;background:#e9e9e9;"></div>
<div style="position:absolute;left:255.5px;top:337.1px;width:573.5px;height:0.7px;background:#e9e9e9;"></div>
<div style="position:absolute;left:255.5px;top:99.0px;width:573.5px;height:0.8px;background:#d4d4d4;"></div>
<div style="position:absolute;left:351.5px;top:87.9px;width:0.7px;height:257.1px;background:#e9e9e9;"></div>
<div style="position:absolute;left:381.90000000000003px;top:87.9px;width:0.7px;height:257.1px;background:#e9e9e9;"></div>
<div style="position:absolute;left:475.1px;top:87.9px;width:0.7px;height:257.1px;background:#e9e9e9;"></div>
<div style="position:absolute;left:551.6px;top:87.9px;width:0.7px;height:257.1px;background:#e9e9e9;"></div>
<div style="position:absolute;left:779.1px;top:87.9px;width:0.7px;height:257.1px;background:#e9e9e9;"></div>
<div style="position:absolute;left:283.7px;top:81.4px;width:1px;height:263.6px;background:#cfcfcf;"></div>
<div style="position:absolute;left:284.7px;top:111.7px;width:544.3000000000001px;height:11.950000000000001px;background:#e2efda;"></div>
<div style="position:absolute;left:284.7px;top:123.6px;width:544.3000000000001px;height:11.950000000000001px;background:#a9d08e;"></div>
<div style="position:absolute;left:284.7px;top:135.5px;width:544.3000000000001px;height:11.950000000000001px;background:#e2efda;"></div>
<div style="position:absolute;left:284.7px;top:147.39999999999998px;width:544.3000000000001px;height:11.950000000000001px;background:#a9d08e;"></div>
<div style="position:absolute;left:284.7px;top:159.29999999999998px;width:544.3000000000001px;height:11.950000000000001px;background:#e2efda;"></div>
<div style="position:absolute;left:284.3px;top:87.9px;width:67.59999999999997px;height:11.699999999999989px;background:#cde9d6;"></div>
<div style="position:absolute;left:255.5px;top:99.6px;width:28.30000000000001px;height:11.9px;background:#cde9d6;"></div>
<svg style="left:275px;top:90px" width="9" height="9"><path d="M8.5 0.5 L8.5 8.5 L0.5 8.5Z" fill="#c6c6c6"/></svg>
<div style="position:absolute;left:284.3px;width:67.59999999999997px;top:87.9px;height:11.699999999999989px;line-height:11.699999999999989px;text-align:center;font-size:8.6px;color:#217346;">A</div>
<div style="position:absolute;left:351.9px;width:30.400000000000034px;top:87.9px;height:11.699999999999989px;line-height:11.699999999999989px;text-align:center;font-size:8.6px;color:#888;">B</div>
<div style="position:absolute;left:475.5px;width:76.5px;top:87.9px;height:11.699999999999989px;line-height:11.699999999999989px;text-align:center;font-size:8.6px;color:#888;">D</div>
<div style="position:absolute;left:255.5px;width:26.30000000000001px;top:100.8px;height:11.9px;line-height:11.9px;text-align:right;font-size:8.6px;color:#217346;">1</div>
<div style="position:absolute;left:255.5px;width:26.30000000000001px;top:112.7px;height:11.9px;line-height:11.9px;text-align:right;font-size:8.6px;color:#5c5c5c;">2</div>
<div style="position:absolute;left:255.5px;width:26.30000000000001px;top:124.6px;height:11.9px;line-height:11.9px;text-align:right;font-size:8.6px;color:#5c5c5c;">3</div>
<div style="position:absolute;left:255.5px;width:26.30000000000001px;top:136.5px;height:11.9px;line-height:11.9px;text-align:right;font-size:8.6px;color:#5c5c5c;">4</div>
<div style="position:absolute;left:255.5px;width:26.30000000000001px;top:148.39999999999998px;height:11.9px;line-height:11.9px;text-align:right;font-size:8.6px;color:#5c5c5c;">5</div>
<div style="position:absolute;left:255.5px;width:26.30000000000001px;top:160.29999999999998px;height:11.9px;line-height:11.9px;text-align:right;font-size:8.6px;color:#5c5c5c;">6</div>
<div style="position:absolute;left:255.5px;width:26.30000000000001px;top:172.2px;height:11.9px;line-height:11.9px;text-align:right;font-size:8.6px;color:#5c5c5c;">7</div>
<div style="position:absolute;left:255.5px;width:26.30000000000001px;top:184.09999999999997px;height:11.9px;line-height:11.9px;text-align:right;font-size:8.6px;color:#5c5c5c;">8</div>
<div style="position:absolute;left:255.5px;width:26.30000000000001px;top:196.0px;height:11.9px;line-height:11.9px;text-align:right;font-size:8.6px;color:#5c5c5c;">9</div>
<div style="position:absolute;left:255.5px;width:26.30000000000001px;top:207.89999999999998px;height:11.9px;line-height:11.9px;text-align:right;font-size:8.6px;color:#5c5c5c;">10</div>
<div style="position:absolute;left:255.5px;width:26.30000000000001px;top:219.79999999999998px;height:11.9px;line-height:11.9px;text-align:right;font-size:8.6px;color:#5c5c5c;">11</div>
<div style="position:absolute;left:255.5px;width:26.30000000000001px;top:231.7px;height:11.9px;line-height:11.9px;text-align:right;font-size:8.6px;color:#5c5c5c;">12</div>
<div style="position:absolute;left:255.5px;width:26.30000000000001px;top:243.6px;height:11.9px;line-height:11.9px;text-align:right;font-size:8.6px;color:#5c5c5c;">13</div>
<div style="position:absolute;left:255.5px;width:26.30000000000001px;top:255.5px;height:11.9px;line-height:11.9px;text-align:right;font-size:8.6px;color:#5c5c5c;">14</div>
<div style="position:absolute;left:255.5px;width:26.30000000000001px;top:267.4px;height:11.9px;line-height:11.9px;text-align:right;font-size:8.6px;color:#5c5c5c;">15</div>
<div style="position:absolute;left:255.5px;width:26.30000000000001px;top:279.3px;height:11.9px;line-height:11.9px;text-align:right;font-size:8.6px;color:#5c5c5c;">16</div>
<div style="position:absolute;left:255.5px;width:26.30000000000001px;top:291.2px;height:11.9px;line-height:11.9px;text-align:right;font-size:8.6px;color:#5c5c5c;">17</div>
<div style="position:absolute;left:255.5px;width:26.30000000000001px;top:303.09999999999997px;height:11.9px;line-height:11.9px;text-align:right;font-size:8.6px;color:#5c5c5c;">18</div>
<div style="position:absolute;left:255.5px;width:26.30000000000001px;top:315.0px;height:11.9px;line-height:11.9px;text-align:right;font-size:8.6px;color:#5c5c5c;">19</div>
<div style="position:absolute;left:255.5px;width:26.30000000000001px;top:326.9px;height:11.9px;line-height:11.9px;text-align:right;font-size:8.6px;color:#5c5c5c;">20</div>
<div style="position:absolute;left:255.5px;width:26.30000000000001px;top:338.8px;height:11.9px;line-height:11.9px;text-align:right;font-size:8.6px;color:#5c5c5c;">21</div>
<div style="position:absolute;left:286.1px;top:101.19px;height:10.32px;line-height:10.32px;font-size:8.6px;color:#111;font-weight:bold;letter-spacing:-0.3px;white-space:nowrap;">Número</div>
<div style="position:absolute;left:353.7px;top:101.19px;height:10.32px;line-height:10.32px;font-size:8.6px;color:#111;font-weight:bold;letter-spacing:-0.3px;white-space:nowrap;">ID</div>
<div style="position:absolute;left:384.1px;top:101.19px;height:10.32px;line-height:10.32px;font-size:8.6px;color:#111;font-weight:bold;letter-spacing:-0.3px;white-space:nowrap;">Número do informe</div>
<div style="position:absolute;left:477.3px;top:101.19px;height:10.32px;line-height:10.32px;font-size:8.6px;color:#111;font-weight:bold;letter-spacing:-0.3px;white-space:nowrap;">Responsável</div>
<div style="position:absolute;left:553.8px;top:101.19px;height:10.32px;line-height:10.32px;font-size:8.6px;color:#111;font-weight:bold;letter-spacing:-0.3px;white-space:nowrap;">Ação</div>
<div style="position:absolute;left:339.9px;top:100.6px;width:11px;height:10px;background:#fff;border:0.8px solid #cfcfcf;border-radius:1px;"></div>
<svg style="left:342.4px;top:104.1px" width="6" height="4"><path d="M0.5 0.5 L3 3 L5.5 0.5" stroke="#888" stroke-width="0.7" fill="none"/></svg>
<div style="position:absolute;left:370.3px;top:100.6px;width:11px;height:10px;background:#fff;border:0.8px solid #cfcfcf;border-radius:1px;"></div>
<svg style="left:372.8px;top:104.1px" width="6" height="4"><path d="M0.5 0.5 L3 3 L5.5 0.5" stroke="#888" stroke-width="0.7" fill="none"/></svg>
<div style="position:absolute;left:463.5px;top:100.6px;width:11px;height:10px;background:#fff;border:0.8px solid #cfcfcf;border-radius:1px;"></div>
<svg style="left:466.0px;top:104.1px" width="6" height="4"><path d="M0.5 0.5 L3 3 L5.5 0.5" stroke="#888" stroke-width="0.7" fill="none"/></svg>
<div style="position:absolute;left:540px;top:100.6px;width:11px;height:10px;background:#fff;border:0.8px solid #cfcfcf;border-radius:1px;"></div>
<svg style="left:542.5px;top:104.1px" width="6" height="4"><path d="M0.5 0.5 L3 3 L5.5 0.5" stroke="#888" stroke-width="0.7" fill="none"/></svg>
<div style="position:absolute;left:283.5px;top:99.1px;width:68.89999999999996px;height:12.9px;border:1.6px solid #107c41;"></div>
<div style="position:absolute;left:286.1px;top:112.65px;height:12px;line-height:12px;width:65.79999999999997px;overflow:hidden;font-size:8.6px;color:#111;letter-spacing:-0.2px;white-space:nowrap;">2020/02-0074</div>
<div style="position:absolute;left:353.7px;top:112.65px;height:12px;line-height:12px;width:28.600000000000033px;overflow:hidden;font-size:8.6px;color:#111;letter-spacing:-0.2px;white-space:nowrap;">15123</div>
<div style="position:absolute;left:384.1px;top:112.65px;height:12px;line-height:12px;width:91.39999999999999px;overflow:hidden;font-size:8.6px;color:#111;letter-spacing:-0.2px;white-space:nowrap;">2025-12-1514</div>
<div style="position:absolute;left:477.3px;top:112.65px;height:12px;line-height:12px;width:74.7px;overflow:hidden;font-size:8.6px;color:#111;letter-spacing:0.05px;white-space:nowrap;">Arthur Martins</div>
<div style="position:absolute;left:553.8px;top:112.65px;height:12px;line-height:12px;width:225.7px;overflow:hidden;font-size:8.6px;color:#111;letter-spacing:-0.2px;white-space:nowrap;">asdfasdfasdf</div>
<div style="position:absolute;left:781.3px;top:112.65px;height:12px;line-height:12px;width:47.7px;overflow:hidden;font-size:8.6px;color:#111;letter-spacing:-0.2px;white-space:nowrap;">Preventiva</div>
<div style="position:absolute;left:286.1px;top:124.54999999999998px;height:12px;line-height:12px;width:65.79999999999997px;overflow:hidden;font-size:8.6px;color:#111;letter-spacing:-0.2px;white-space:nowrap;">2020/02-0074</div>
<div style="position:absolute;left:353.7px;top:124.54999999999998px;height:12px;line-height:12px;width:28.600000000000033px;overflow:hidden;font-size:8.6px;color:#111;letter-spacing:-0.2px;white-space:nowrap;">15125</div>
<div style="position:absolute;left:384.1px;top:124.54999999999998px;height:12px;line-height:12px;width:91.39999999999999px;overflow:hidden;font-size:8.6px;color:#111;letter-spacing:-0.2px;white-space:nowrap;">2025-12-1514</div>
<div style="position:absolute;left:477.3px;top:124.54999999999998px;height:12px;line-height:12px;width:74.7px;overflow:hidden;font-size:8.6px;color:#111;letter-spacing:0.05px;white-space:nowrap;">Arthur Martins</div>
<div style="position:absolute;left:553.8px;top:124.54999999999998px;height:12px;line-height:12px;width:225.7px;overflow:hidden;font-size:8.6px;color:#111;letter-spacing:-0.2px;white-space:nowrap;">asdfasdfasdfasdfasdf</div>
<div style="position:absolute;left:781.3px;top:124.54999999999998px;height:12px;line-height:12px;width:47.7px;overflow:hidden;font-size:8.6px;color:#111;letter-spacing:-0.2px;white-space:nowrap;">Preventiva</div>
<div style="position:absolute;left:286.1px;top:136.45px;height:12px;line-height:12px;width:65.79999999999997px;overflow:hidden;font-size:8.6px;color:#111;letter-spacing:-0.2px;white-space:nowrap;">2020/02-0074</div>
<div style="position:absolute;left:353.7px;top:136.45px;height:12px;line-height:12px;width:28.600000000000033px;overflow:hidden;font-size:8.6px;color:#111;letter-spacing:-0.2px;white-space:nowrap;">15126</div>
<div style="position:absolute;left:384.1px;top:136.45px;height:12px;line-height:12px;width:91.39999999999999px;overflow:hidden;font-size:8.6px;color:#111;letter-spacing:-0.2px;white-space:nowrap;">2025-12-1514</div>
<div style="position:absolute;left:477.3px;top:136.45px;height:12px;line-height:12px;width:74.7px;overflow:hidden;font-size:8.6px;color:#111;letter-spacing:0.05px;white-space:nowrap;">Arthur Martins</div>
<div style="position:absolute;left:553.8px;top:136.45px;height:12px;line-height:12px;width:225.7px;overflow:hidden;font-size:8.6px;color:#111;letter-spacing:-0.2px;white-space:nowrap;">Eliminar condição de risco</div>
<div style="position:absolute;left:781.3px;top:136.45px;height:12px;line-height:12px;width:47.7px;overflow:hidden;font-size:8.6px;color:#111;letter-spacing:-0.2px;white-space:nowrap;">Simples Regi</div>
<div style="position:absolute;left:286.1px;top:148.34999999999997px;height:12px;line-height:12px;width:65.79999999999997px;overflow:hidden;font-size:8.6px;color:#111;letter-spacing:-0.2px;white-space:nowrap;">2020/02-0074</div>
<div style="position:absolute;left:353.7px;top:148.34999999999997px;height:12px;line-height:12px;width:28.600000000000033px;overflow:hidden;font-size:8.6px;color:#111;letter-spacing:-0.2px;white-space:nowrap;">15127</div>
<div style="position:absolute;left:384.1px;top:148.34999999999997px;height:12px;line-height:12px;width:91.39999999999999px;overflow:hidden;font-size:8.6px;color:#111;letter-spacing:-0.2px;white-space:nowrap;">2025-12-1514</div>
<div style="position:absolute;left:477.3px;top:148.34999999999997px;height:12px;line-height:12px;width:74.7px;overflow:hidden;font-size:8.6px;color:#111;letter-spacing:0.05px;white-space:nowrap;">Arthur Martins</div>
<div style="position:absolute;left:553.8px;top:148.34999999999997px;height:12px;line-height:12px;width:225.7px;overflow:hidden;font-size:8.6px;color:#111;letter-spacing:-0.2px;white-space:nowrap;">Proceder a sinalização da máquina TAG J311A</div>
<div style="position:absolute;left:781.3px;top:148.34999999999997px;height:12px;line-height:12px;width:47.7px;overflow:hidden;font-size:8.6px;color:#111;letter-spacing:-0.2px;white-space:nowrap;">Simples Regi</div>
<div style="position:absolute;left:286.1px;top:160.24999999999997px;height:12px;line-height:12px;width:65.79999999999997px;overflow:hidden;font-size:8.6px;color:#111;letter-spacing:-0.2px;white-space:nowrap;">2020/02-0074</div>
<div style="position:absolute;left:353.7px;top:160.24999999999997px;height:12px;line-height:12px;width:28.600000000000033px;overflow:hidden;font-size:8.6px;color:#111;letter-spacing:-0.2px;white-space:nowrap;">15124</div>
<div style="position:absolute;left:384.1px;top:160.24999999999997px;height:12px;line-height:12px;width:91.39999999999999px;overflow:hidden;font-size:8.6px;color:#111;letter-spacing:-0.2px;white-space:nowrap;">2025-12-1514</div>
<div style="position:absolute;left:477.3px;top:160.24999999999997px;height:12px;line-height:12px;width:74.7px;overflow:hidden;font-size:8.6px;color:#111;letter-spacing:0.05px;white-space:nowrap;">Arthur Martins</div>
<div style="position:absolute;left:553.8px;top:160.24999999999997px;height:12px;line-height:12px;width:225.7px;overflow:hidden;font-size:8.6px;color:#111;letter-spacing:-0.2px;white-space:nowrap;">sdfgsdfgsdfg</div>
<div style="position:absolute;left:781.3px;top:160.24999999999997px;height:12px;line-height:12px;width:47.7px;overflow:hidden;font-size:8.6px;color:#111;letter-spacing:-0.2px;white-space:nowrap;">Preventiva</div>
<div style="position:absolute;left:828.8px;top:81px;width:7.5px;height:264px;background:#dedede;"></div>
<svg style="left:829px;top:83px" width="7" height="6"><path d="M0.5 4.5 L3.5 1 L6.5 4.5Z" fill="#999"/></svg>
<div style="position:absolute;left:829.8px;top:92.5px;width:4.3px;height:90px;background:#777;border-radius:2px;"></div>
<svg style="left:829px;top:337.5px" width="7" height="6"><path d="M0.5 1 L3.5 4.5 L6.5 1Z" fill="#888"/></svg>
<div style="position:absolute;left:257.5px;top:345px;width:577px;height:7px;background:#e8e8e8;"></div>
<svg style="left:259px;top:345.5px" width="6" height="7"><path d="M5 0.7 L1 3.3 L5 6Z" fill="#666"/></svg>
<div style="position:absolute;left:268.5px;top:346.3px;width:156px;height:4.6px;background:#777;border-radius:2.5px;"></div>
<svg style="left:820px;top:345.5px" width="6" height="7"><path d="M1 0.7 L5 3.3 L1 6Z" fill="#999"/></svg>
<div style="position:absolute;left:829px;top:345px;width:7px;height:6.5px;background:#e0e0e0;"></div>
<div style="position:absolute;left:257.5px;top:352px;width:577px;height:20.5px;background:#f3f3f3;"></div>
<div style="position:absolute;left:266px;top:353.70px;height:15.60px;line-height:15.60px;font-size:13px;color:#c0c0c0;font-weight:normal;letter-spacing:0px;white-space:nowrap;">&#8249;</div>
<div style="position:absolute;left:286px;top:353.70px;height:15.60px;line-height:15.60px;font-size:13px;color:#c0c0c0;font-weight:normal;letter-spacing:0px;white-space:nowrap;">&#8250;</div>
<div style="position:absolute;left:304px;top:358.8px;width:8.5px;height:0.9px;background:#666;"></div>
<div style="position:absolute;left:304px;top:361.8px;width:8.5px;height:0.9px;background:#666;"></div>
<div style="position:absolute;left:304px;top:364.8px;width:8.5px;height:0.9px;background:#666;"></div>
<div style="position:absolute;left:324.5px;top:357.48px;height:11.04px;line-height:11.04px;font-size:9.2px;color:#4a4a4a;font-weight:normal;letter-spacing:-0.2px;white-space:nowrap;">Informe de Desvios</div>
<div style="position:absolute;left:412.3px;top:357.84px;height:10.32px;line-height:10.32px;font-size:8.6px;color:#3c3c3c;font-weight:bold;letter-spacing:-0.15px;white-space:nowrap;">Ações</div>
<div style="position:absolute;left:412px;top:371.2px;width:24px;height:1.5px;background:#8fbf9c;"></div>
<div style="position:absolute;left:447.5px;top:361.5px;width:6px;height:0.8px;background:#c8c8c8;"></div>
<div style="position:absolute;left:257.5px;top:372.5px;width:577px;height:14px;background:#fff;border-top:0.6px solid #e8e8e8;"></div>
<div style="position:absolute;left:277.6px;top:376.42px;height:8.76px;line-height:8.76px;font-size:7.3px;color:#4a4a4a;font-weight:normal;letter-spacing:-0.05px;white-space:nowrap;">Estatísticas de Pasta de Trabalho</div>
<svg style="left:615px;top:378.5px" width="5" height="4"><path d="M0.5 0.5 L2.5 3 L4.5 0.5Z" fill="#555"/></svg>
<div style="position:absolute;left:645.5px;top:376.24px;height:9.12px;line-height:9.12px;font-size:7.6px;color:#4a4a4a;font-weight:normal;letter-spacing:-0.05px;white-space:nowrap;">Fornecer Comentários à Microsoft</div>
<div style="position:absolute;left:780px;top:379.5px;width:8px;height:0.9px;background:#555;"></div>
<div style="position:absolute;left:796px;top:376.24px;height:9.12px;line-height:9.12px;font-size:7.6px;color:#4a4a4a;font-weight:normal;letter-spacing:-0.1px;white-space:nowrap;">100%</div>
<div style="position:absolute;left:820px;top:379.5px;width:8.5px;height:0.9px;background:#555;"></div>
<div style="position:absolute;left:823.8px;top:375.5px;width:0.9px;height:8.5px;background:#555;"></div>
<div style="position:absolute;left:257.5px;top:386.5px;width:577px;height:27.3px;background:#f0dbb0;"></div>
<svg style="left:265.5px;top:394.5px" width="12" height="12"><circle cx="5.8" cy="5.8" r="5.2" fill="#3a6fb0" stroke="#2d5890" stroke-width="0.6"/><circle cx="5.8" cy="3.3" r="0.9" fill="#fff"/><rect x="5" y="4.8" width="1.6" height="4.3" fill="#fff"/></svg>
<div style="position:absolute;left:717px;top:393px;width:57px;height:14px;background:#f7f5f1;border-radius:2px;box-shadow:0 0 0.8px rgba(0,0,0,0.3);"></div>
<svg style="left:718.5px;top:394.5px" width="12" height="12"><path d="M5.5 0.5 V6.5" stroke="#111" stroke-width="1.5"/><path d="M2.5 4.3 L5.5 7.6 L8.5 4.3Z" fill="#111"/><path d="M1 7.5 V10 H10 V7.5" stroke="#111" stroke-width="1.4" fill="none"/></svg>
<div style="position:absolute;left:732.5px;top:396.32px;height:9.96px;line-height:9.96px;font-size:8.3px;color:#444;font-weight:normal;letter-spacing:-0.15px;white-space:nowrap;text-shadow:0 0 0.3px #444;">Download</div>
<div style="position:absolute;left:780px;top:393px;width:43.5px;height:14px;background:#f7f5f1;border-radius:2px;box-shadow:0 0 0.8px rgba(0,0,0,0.3);"></div>
<svg style="left:782.3px;top:395.8px" width="10" height="10"><path d="M1 1 L8.3 8.3 M8.3 1 L1 8.3" stroke="#111" stroke-width="1.9"/></svg>
<div style="position:absolute;left:795px;top:396.32px;height:9.96px;line-height:9.96px;font-size:8.3px;color:#444;font-weight:normal;letter-spacing:-0.15px;white-space:nowrap;text-shadow:0 0 0.3px #444;">Fechar</div>
<div style="position:absolute;left:655.5px;top:37px;width:175.5px;height:77px;background:#107c41;box-shadow:0 2px 5px rgba(0,0,0,0.3);"></div>
<div style="position:absolute;left:667.6px;top:47.00px;height:15.00px;line-height:15.00px;font-size:12.5px;color:#fff;font-weight:bold;letter-spacing:-0.3px;white-space:nowrap;">Editar sua própria cópia</div>
<div style="position:absolute;left:667.6px;top:71.00px;height:10.80px;line-height:10.80px;font-size:9px;color:#fff;font-weight:normal;letter-spacing:-0.12px;white-space:nowrap;">Você pode editar facilmente uma</div>
<div style="position:absolute;left:667.6px;top:82.70px;height:10.80px;line-height:10.80px;font-size:9px;color:#fff;font-weight:normal;letter-spacing:-0.12px;white-space:nowrap;">cópia deste arquivo salvando-o em</div>
<div style="position:absolute;left:667.6px;top:94.40px;height:10.80px;line-height:10.80px;font-size:9px;color:#fff;font-weight:normal;letter-spacing:-0.12px;white-space:nowrap;">seu OneDrive</div>
<div style="position:absolute;left:0px;top:27px;width:106px;height:17px;border:2px solid #ff0000;"></div>
<div style="position:absolute;left:102.0px;top:22.0px;width:26px;height:26px;border-radius:50%;background:#ff0000;color:#fff;font-size:16.5px;line-height:26px;text-align:center;"></div>
<svg style="left:105px;top:25px" width="20" height="20"><path d="M9.6 4 H11.8 V16.2 H9.6 V7.2 Q8.3 8.6 6.4 9.3 V7.3 Q8.6 6.2 9.6 4Z" fill="#fff"/></svg>
<div style="position:absolute;left:1.5px;top:132.4px;width:118.5px;height:16.0px;border:2px solid #ff0000;"></div>
<div style="position:absolute;left:114.0px;top:128.0px;width:26px;height:26px;border-radius:50%;background:#ff0000;color:#fff;font-size:16.5px;line-height:26px;text-align:center;">2</div>
<div style="position:absolute;left:1.5px;top:194.3px;width:134.5px;height:19.5px;border:2px solid #ff0000;"></div>
<div style="position:absolute;left:128.0px;top:190.0px;width:26px;height:26px;border-radius:50%;background:#ff0000;color:#fff;font-size:16.5px;line-height:26px;text-align:center;">3</div>
<div style="position:absolute;left:451px;top:432px;width:62.700000000000045px;height:19.600000000000023px;border:2px solid #ff0000;"></div>
<div style="position:absolute;left:468.0px;top:406.0px;width:26px;height:26px;border-radius:50%;background:#ff0000;color:#fff;font-size:16.5px;line-height:26px;text-align:center;">4</div>
<div style="position:absolute;left:399.8px;top:352px;width:53.0px;height:19.399999999999977px;border:2px solid #ff0000;"></div>
<div style="position:absolute;left:413.0px;top:328.3px;width:26px;height:26px;border-radius:50%;background:#ff0000;color:#fff;font-size:16.5px;line-height:26px;text-align:center;">5</div>
<div style="position:absolute;left:378px;top:94.8px;width:92px;height:81.7px;border:2px solid #ff0000;"></div>
<div style="position:absolute;left:411.0px;top:75.0px;width:26px;height:26px;border-radius:50%;background:#ff0000;color:#fff;font-size:16.5px;line-height:26px;text-align:center;">6</div>
</body></html>
